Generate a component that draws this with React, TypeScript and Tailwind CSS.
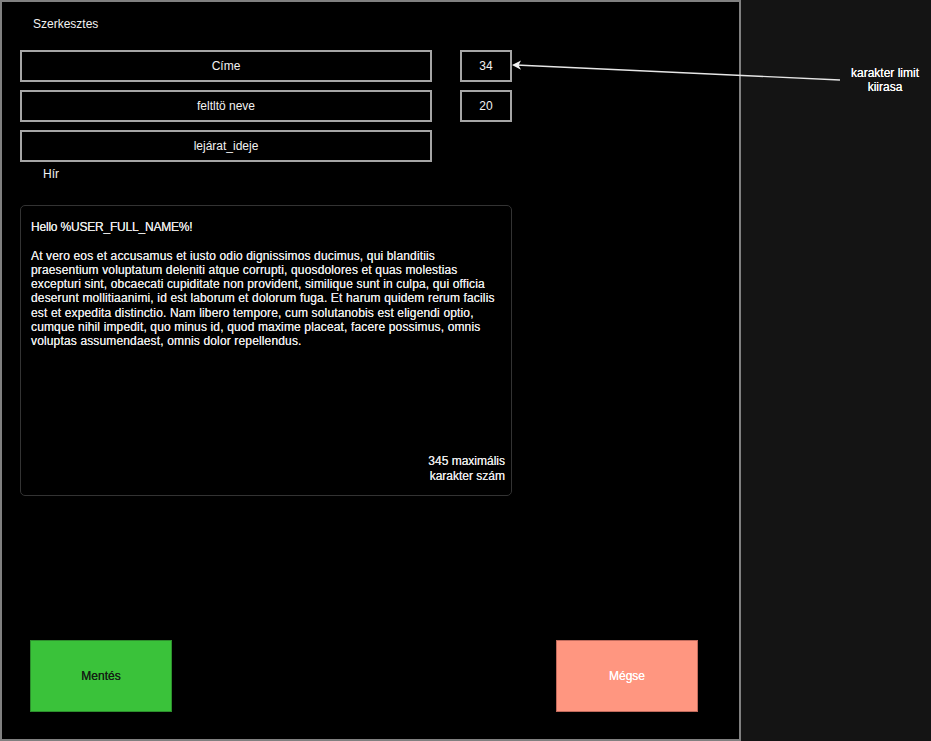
import React from "react";

const BODY_LINES = [
  "At vero eos et accusamus et iusto odio dignissimos ducimus, qui blanditiis",
  "praesentium voluptatum deleniti atque corrupti, quosdolores et quas molestias",
  "excepturi sint, obcaecati cupiditate non provident, similique sunt in culpa, qui officia",
  "deserunt mollitiaanimi, id est laborum et dolorum fuga. Et harum quidem rerum facilis",
  "est et expedita distinctio. Nam libero tempore, cum solutanobis est eligendi optio,",
  "cumque nihil impedit, quo minus id, quod maxime placeat, facere possimus, omnis",
  "voluptas assumendaest, omnis dolor repellendus.",
];

function Field({ label, count }: { label: string; count?: string }) {
  return (
    <div className="flex gap-[28px]">
      <div className="w-[412px] h-[32px] border-2 border-[#a6a6a6] flex items-center justify-center">
        {label}
      </div>
      {count && (
        <div className="w-[52px] h-[32px] border-2 border-[#a6a6a6] flex items-center justify-center">
          {count}
        </div>
      )}
    </div>
  );
}

export default function App() {
  return (
    <div
      className="relative flex w-[931px] h-[741px] bg-[#141414] text-[12px] leading-[14px] text-[#f2f2f2]"
      style={{ fontFamily: '"Liberation Sans", Arial, sans-serif' }}
    >
      {/* editor panel */}
      <div className="w-[741px] h-[741px] border-2 border-[#808080] bg-black flex flex-col">
        <div className="pl-[31px] pt-[15px]">Szerkesztes</div>

        <div className="ml-[18px] mt-[19px] flex flex-col gap-[8px]">
          <Field label="Címe" count="34" />
          <Field label="feltltö neve" count="20" />
          <Field label="lejárat_ideje" />
        </div>

        <div className="pl-[41px] mt-[5px]">Hír</div>

        <div className="ml-[18px] mt-[24px] w-[492px] h-[291px] border border-[#333333] rounded-[5px] flex flex-col pl-[10px] pr-[6px] pt-[14px] pb-[12px] text-[#e6e6e6] leading-[14.3px] [text-shadow:0_0_0.5px_#ffffff]">
          <p className="tracking-[-0.2px]">Hello %USER_FULL_NAME%!</p>
          <p className="mt-[14.3px] whitespace-nowrap tracking-[0.15px]">
            {BODY_LINES.map((line) => (
              <span key={line} className="block">
                {line}
              </span>
            ))}
          </p>
          <p className="mt-auto self-end text-right">
            345 maximális
            <br />
            karakter szám
          </p>
        </div>

        <div className="mt-[144px] pl-[28px] pr-[41px] flex justify-between">
          <button className="w-[142px] h-[72px] bg-[#3ac23a] border border-[#2d8f2d] text-[#142014] text-[12px] [text-shadow:0_0_0.5px_#142014]">
            Mentés
          </button>
          <button className="w-[142px] h-[72px] bg-[#ff9680] border border-[#c06a5c] text-white text-[12px] [text-shadow:0_0_0.5px_#ffffff]">
            Mégse
          </button>
        </div>
      </div>

      {/* annotation */}
      <div className="flex-1">
        <div className="ml-[99px] mt-[66px] w-[90px] text-center text-white [text-shadow:0_0_0.5px_#ffffff]">
          karakter limit
          <br />
          kiirasa
        </div>
      </div>

      <svg className="absolute inset-0 pointer-events-none" width="931" height="741">
        <line x1="840" y1="80" x2="516" y2="65" stroke="#e6e6e6" strokeWidth="1.3" />
        <path d="M512 65 L521 60.5 L518.5 65.2 L521 69.8 Z" fill="#f2f2f2" />
      </svg>
    </div>
  );
}
